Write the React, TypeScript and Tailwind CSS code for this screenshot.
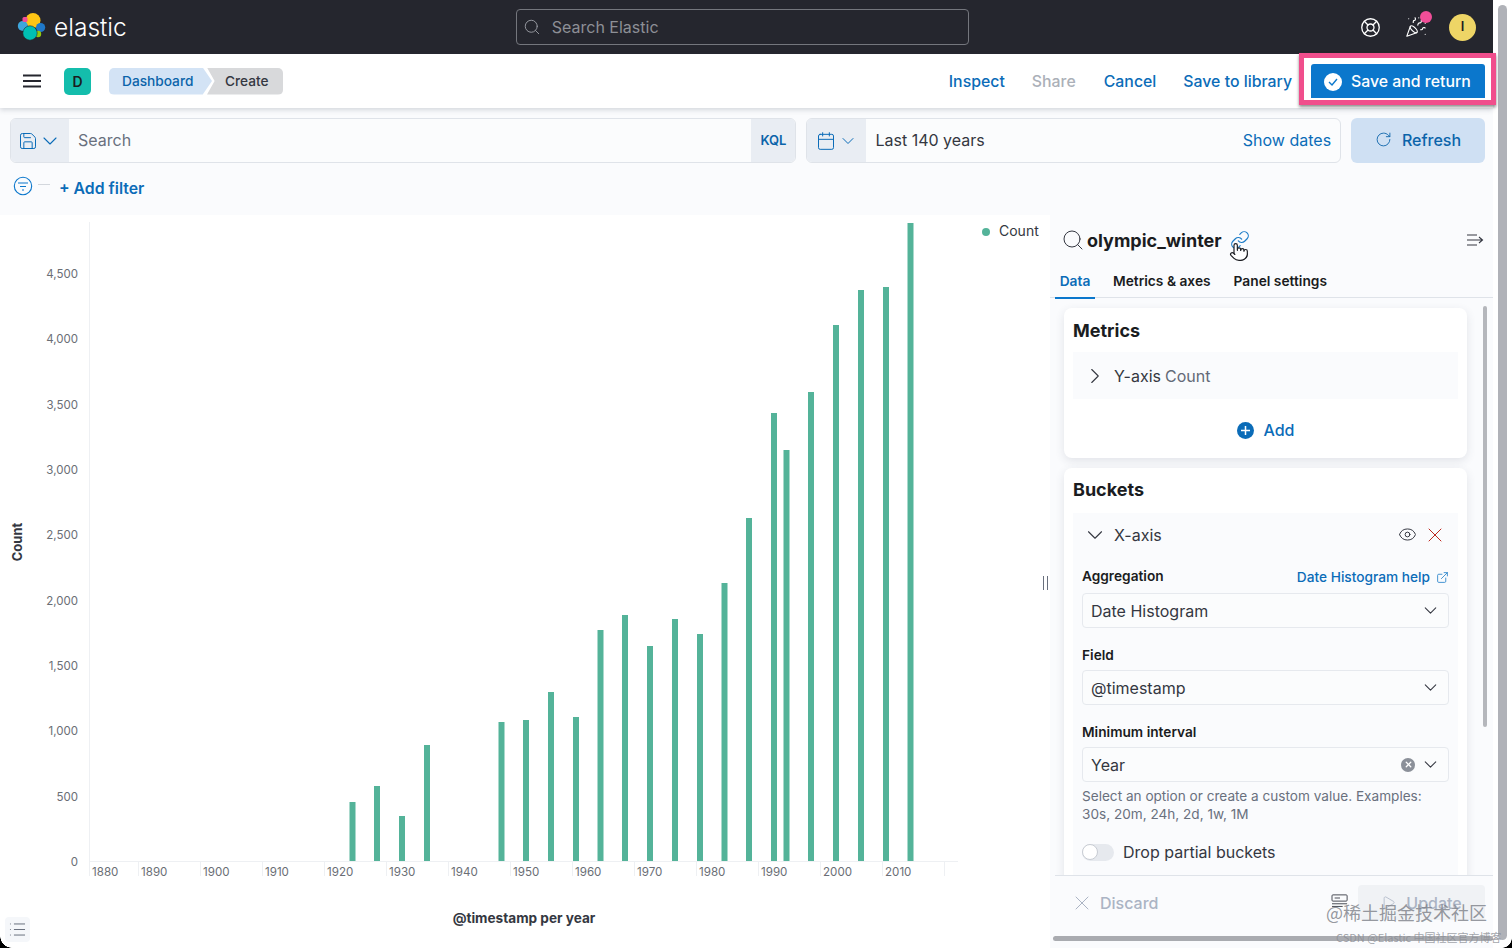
import {
  Calendar,
  ChevronDown,
  ChevronRight,
  Eye,
  ExternalLink,
  LifeBuoy,
  Link as LinkIcon,
  List,
  PartyPopper,
  Play,
  Pointer,
  RotateCw,
  Save,
  Search,
  X,
} from "lucide-react";

const yTicks = [
  { label: "0", y: 861 },
  { label: "500", y: 796 },
  { label: "1,000", y: 730.5 },
  { label: "1,500", y: 665 },
  { label: "2,000", y: 600 },
  { label: "2,500", y: 534.5 },
  { label: "3,000", y: 469 },
  { label: "3,500", y: 404 },
  { label: "4,000", y: 338.5 },
  { label: "4,500", y: 273 },
];

const xTicks = ["1880", "1890", "1900", "1910", "1920", "1930", "1940", "1950", "1960", "1970", "1980", "1990", "2000", "2010"];

const bars = [
  [352.5, 802], [377, 786], [402, 816], [427, 745], [501.5, 722], [526, 720], [551, 692], [576, 717],
  [600.5, 630], [625, 615], [650, 646], [675, 619], [700, 634], [724.5, 583], [749, 518], [774, 413],
  [786.5, 450], [811, 392], [836, 325], [861, 290], [886, 287], [910.5, 223],
];

function ElasticLogo() {
  return (
    <svg width="30" height="30" viewBox="0 0 30 30" className="shrink-0">
      <circle cx="16" cy="8.5" r="7.5" fill="#fec514" />
      <circle cx="5.8" cy="14" r="5" fill="#3ea6dc" />
      <circle cx="23.6" cy="15.5" r="4.6" fill="#1f78c9" />
      <circle cx="21" cy="22" r="3.2" fill="#93c90e" />
      <circle cx="13" cy="21" r="7.2" fill="#00bfb3" stroke="#25262e" strokeWidth="0.6" />
      <rect x="5.5" y="5" width="5" height="5" rx="1.5" fill="#f04e98" />
    </svg>
  );
}

function Chart() {
  return (
    <svg width="1050" height="733" viewBox="0 215 1050 733" className="block shrink-0 bg-white">
      <line x1="89.5" y1="222" x2="89.5" y2="861" stroke="#eef0f3" />
      <line x1="89" y1="861.5" x2="958" y2="861.5" stroke="#eef0f3" />
      {yTicks.map((t) => (
        <text key={t.label} x="78" y={t.y + 4.5} textAnchor="end" fontSize="11.5" fill="#6a6e75">
          {t.label}
        </text>
      ))}
      {xTicks.map((label, i) => {
        const tick = i === 0 ? 89.5 : 76.5 + i * 62;
        return (
          <g key={label}>
            <line x1={tick} y1="861" x2={tick} y2="876" stroke="#eef0f3" />
            <text x={tick + 2.5} y="875.5" fontSize="11.6" fill="#6a6e75">
              {label}
            </text>
          </g>
        );
      })}
      <line x1="944.5" y1="861" x2="944.5" y2="876" stroke="#eef0f3" />
      {bars.map(([x, top]) => (
        <rect key={x} x={x - 3} y={top} width="6" height={861 - top} fill="#54b399" />
      ))}
      <text x="524" y="923" textAnchor="middle" fontSize="13.6" fontWeight="700" fill="#343741">
        @timestamp per year
      </text>
      <text transform="translate(22 542) rotate(-90)" textAnchor="middle" fontSize="13" fontWeight="700" fill="#343741">
        Count
      </text>
      <circle cx="986" cy="232" r="4" fill="#54b399" />
      <text x="999" y="236" fontSize="14" fill="#343741">
        Count
      </text>
      <line x1="1043.5" y1="576" x2="1043.5" y2="590" stroke="#69707d" />
      <line x1="1047.5" y1="576" x2="1047.5" y2="590" stroke="#69707d" />
    </svg>
  );
}

function Field({ label, value, clear, first }: { label: string; value: string; clear?: boolean; first?: boolean }) {
  return (
    <div className="flex flex-col">
      <div className="flex h-[20px] items-center text-[13.7px] font-semibold leading-none text-[#1a1c21]">{label}</div>
      <div
        className={
          first
            ? "mt-[6px] flex h-[35px] items-center justify-between rounded-[4px] border border-[#e6e9ee] bg-[#fbfcfd] pl-[8px] pr-[7px] text-[16px] text-[#343741]"
            : "mt-[4px] flex h-[35px] items-center justify-between rounded-[4px] border border-[#e6e9ee] bg-[#fbfcfd] pl-[8px] pr-[7px] text-[16px] text-[#343741]"
        }
      >
        <span>{value}</span>
        <span className="flex items-center gap-[5px]">
          {clear && (
            <span className="flex h-[14px] w-[14px] items-center justify-center rounded-full bg-[#8b9099]">
              <X size={9} color="#ffffff" strokeWidth={3.5} />
            </span>
          )}
          <ChevronDown size={21} color="#343741" strokeWidth={1.2} />
        </span>
      </div>
    </div>
  );
}

function EditorPanel() {
  return (
    <div className="relative flex h-[733px] w-[443px] shrink-0 flex-col overflow-hidden bg-[#fafbfd]">
      <div className="flex h-[50px] shrink-0 items-center pl-[11px] pr-[8px]">
        <Search size={24} color="#343741" strokeWidth={1} className="shrink-0" />
        <span className="ml-[2px] text-[18px] font-bold text-[#1a1c21]">olympic_winter</span>
        <LinkIcon size={20} color="#1c7cc7" strokeWidth={1.4} className="ml-[8px]" />
        <svg width="18" height="14" viewBox="0 0 18 14" fill="none" stroke="#343741" strokeWidth="1.1" className="ml-auto mr-[1px] shrink-0">
          <path d="M1 2h10M1 7h15M1 12h10M13 4l3.5 3-3.5 3" />
        </svg>
      </div>
      <Pointer size={20} color="#1a1c21" fill="#ffffff" strokeWidth={1.4} className="absolute left-[179px] top-[27px]" />
      <div className="flex h-[33px] shrink-0 items-center gap-[18px] border-b border-[#dfe3e9] pl-[5px] pt-[1px] text-[13.75px] font-semibold text-[#1a1c21]">
        <span className="-mb-[1px] flex h-[33px] w-[40px] items-center justify-center border-b-2 border-[#0b77cc] text-[#0b6cb8]">Data</span>
        <span>Metrics &amp; axes</span>
        <span className="ml-[5px]">Panel settings</span>
      </div>

      <div className="flex min-h-0 flex-1 flex-col gap-[10px] pl-[14px] pt-[10px]">
        <div className="flex h-[150px] w-[403px] shrink-0 flex-col rounded-[8px] bg-white px-[9px] shadow-[0_3px_10px_rgba(50,60,80,0.12)]">
          <div className="flex h-[44px] items-center pt-[1px] text-[18px] font-bold text-[#1a1c21]">Metrics</div>
          <div className="flex h-[47px] items-center bg-[#fafbfd] pl-[9px] text-[16px] text-[#343741]">
            <ChevronRight size={26} strokeWidth={1} />
            <span className="ml-[6px]">Y-axis</span>
            <span className="ml-[4px] text-[#646a77]">Count</span>
          </div>
          <div className="flex flex-1 items-center justify-center gap-[10px] pt-[3px] text-[16px] font-medium text-[#0b6cb8]">
            <span className="flex h-[17px] w-[17px] items-center justify-center rounded-full bg-[#0b6cb8] text-white">
              <svg width="9" height="9" viewBox="0 0 9 9" stroke="#ffffff" strokeWidth="1.5">
                <path d="M4.5 0v9M0 4.5h9" />
              </svg>
            </span>
            Add
          </div>
        </div>

        <div className="flex w-[403px] flex-col rounded-t-[8px] bg-white px-[9px] shadow-[0_3px_10px_rgba(50,60,80,0.12)]">
          <div className="flex h-[45px] shrink-0 items-center pb-[2px] text-[18px] font-bold text-[#1a1c21]">Buckets</div>
          <div className="flex flex-col bg-[#fafbfd] px-[9px] pb-[20px]">
            <div className="flex h-[45px] items-center pb-[2px] text-[16px] text-[#343741]">
              <ChevronDown size={26} strokeWidth={1} />
              <span className="ml-[6px]">X-axis</span>
              <Eye size={19} strokeWidth={1.25} className="ml-auto" />
              <X size={24} color="#bd271e" strokeWidth={1} className="ml-[6px] mr-[2px]" />
            </div>
            <div className="relative mt-[9px]">
              <Field label="Aggregation" value="Date Histogram" first />
              <span className="absolute right-0 top-0 flex items-center gap-[6px] text-[13.7px] font-medium text-[#0b6cb8]">
                Date Histogram help
                <ExternalLink size={13} color="#1c7cc7" strokeWidth={1.5} />
              </span>
            </div>
            <div className="mt-[18px]">
              <Field label="Field" value="@timestamp" />
            </div>
            <div className="mt-[18px]">
              <Field label="Minimum interval" value="Year" clear />
            </div>
            <p className="mt-[5px] text-[13.6px] leading-[18px] text-[#69707d]">
              Select an option or create a custom value. Examples:
              <br />
              30s, 20m, 24h, 2d, 1w, 1M
            </p>
            <div className="mt-[17px] flex items-center text-[16px] text-[#343741]">
              <span className="flex h-[17px] w-[32px] items-center rounded-full bg-[#e6e9ee]">
                <span className="h-[16px] w-[16px] rounded-full border border-[#c8ccd3] bg-white" />
              </span>
              <span className="ml-[9px]">Drop partial buckets</span>
            </div>
          </div>
        </div>
      </div>

      <div className="absolute bottom-0 left-[5px] right-0 flex h-[73px] items-start border-t border-[#dfe3e9] bg-[#fafbfd] pl-[15px] pr-[8px] pt-[9px] text-[16px] font-medium text-[#abb4c4]">
        <span className="mt-[6px] flex items-center gap-[6px]">
          <X size={24} strokeWidth={1} />
          Discard
        </span>
        <svg width="18" height="16" viewBox="0 0 20 18" fill="none" stroke="#343741" strokeWidth="1" className="ml-auto mr-[9px] mt-[9px]">
          <rect x="1" y="1" width="17" height="7" rx="1" />
          <path d="M4 4.5h6M1 11h17M1 14h12" />
        </svg>
        <span className="flex h-[35px] w-[127px] items-center justify-center gap-[10px] rounded-[4px] bg-[#f0f2f5]">
          <Play size={15} strokeWidth={1.25} />
          Update
        </span>
      </div>

      <div className="absolute right-[6px] top-[91px] h-[421px] w-[4px] rounded-full bg-[#b5b7bc]" />
      <div className="absolute bottom-[7px] left-[3px] right-0 h-[5px] rounded-full bg-[#a9abb0]" />
    </div>
  );
}

export default function App() {
  return (
    <div className="relative flex h-[948px] w-[1512px] overflow-hidden bg-white font-['Inter',sans-serif]">
      <div className="flex w-[1493px] shrink-0 flex-col">
        <header className="flex h-[54px] shrink-0 items-center bg-[#25262e] pl-[17px] pr-[17px]">
          <ElasticLogo />
          <span className="ml-[7px] text-[24.5px] font-light leading-none text-white">elastic</span>
          <div className="ml-[389px] flex h-[36px] w-[453px] items-center rounded-[4px] border border-[#74767d] pl-[6px] text-[16px] text-[#8d8f96]">
            <Search size={18} color="#9a9ca3" strokeWidth={1.25} />
            <span className="ml-[11px]">Search Elastic</span>
          </div>
          <div className="ml-auto flex items-center">
            <LifeBuoy size={21} color="#ffffff" strokeWidth={1.5} />
            <span className="relative ml-[24px]">
              <PartyPopper size={22} color="#ffffff" strokeWidth={1.25} />
              <span className="absolute -right-[5px] -top-[5px] h-[12px] w-[12px] rounded-full bg-[#f04e98]" />
            </span>
            <span className="ml-[22px] flex h-[27px] w-[27px] items-center justify-center rounded-full bg-[#eed566] text-[13px] font-semibold text-[#1a1c21]">
              I
            </span>
          </div>
        </header>

        <nav className="relative z-10 flex h-[54px] shrink-0 items-center bg-white pl-[23px] shadow-[0_2px_5px_rgba(60,70,90,0.2)]">
          <svg width="18" height="14" viewBox="0 0 18 14" stroke="#25262e" strokeWidth="1.8">
            <path d="M0 1.5h18M0 7h18M0 12.5h18" />
          </svg>
          <span className="ml-[23px] flex h-[27px] w-[27px] items-center justify-center rounded-[5px] bg-[#14bdac] text-[14px] font-semibold text-[#1a1c21]">
            D
          </span>
          <div className="ml-[18px] flex h-[27px] items-center text-[13.7px] font-medium">
            <span className="flex h-full w-[103px] items-center rounded-l-[5px] bg-[#d3e3f5] pl-[13px] pt-px text-[#0b64aa] [clip-path:polygon(0_0,91%_0,100%_50%,91%_100%,0_100%)]">
              Dashboard
            </span>
            <span className="-ml-[5px] flex h-full w-[76px] items-center rounded-r-[5px] bg-[#d8d9db] pl-[18px] pt-px text-[#343741] [clip-path:polygon(0_0,100%_0,100%_100%,0_100%,10%_50%)]">
              Create
            </span>
          </div>
          <div className="ml-auto flex items-center pr-[8px] text-[15.85px] font-medium text-[#0b6cb8]">
            <span className="pt-[2px]">Inspect</span>
            <span className="ml-[27px] pt-[2px] text-[#abb0b8]">Share</span>
            <span className="ml-[28px] pt-[2px]">Cancel</span>
            <span className="ml-[27px] pt-[2px]">Save to library</span>
            <span className="-mt-px ml-[19px] flex h-[34px] w-[174px] items-center rounded-t-[3px] bg-[#0b77cc] pl-[13px] pt-[3px] text-white">
              <span className="flex h-[18px] w-[18px] items-center justify-center rounded-full bg-white">
                <svg width="10" height="8" viewBox="0 0 10 8" fill="none" stroke="#0b77cc" strokeWidth="1.4">
                  <path d="M1 4l3 3 5-6" />
                </svg>
              </span>
              <span className="ml-[9px]">Save and return</span>
            </span>
          </div>
        </nav>

        <div className="flex h-[107px] shrink-0 flex-col bg-[#fafbfd] pl-[10px] pr-[8px] pt-[10px]">
          <div className="flex h-[45px] gap-[10px]">
            <div className="flex h-full w-[787px] overflow-hidden rounded-[6px] border border-[#dfe3e9] bg-[#fbfcfd] text-[16px]">
              <span className="flex w-[58px] items-center justify-center bg-[#e9edf3]">
                <Save size={20} color="#0b6cb8" strokeWidth={1.2} />
                <ChevronDown size={24} color="#0b6cb8" strokeWidth={1.1} />
              </span>
              <span className="flex flex-1 items-center pb-[2px] pl-[9px] text-[#69707d]">Search</span>
              <span className="flex w-[44px] items-center justify-center bg-[#e9edf3] text-[13px] font-semibold text-[#0b64aa]">KQL</span>
            </div>
            <div className="flex h-full w-[535px] overflow-hidden rounded-[6px] border border-[#dfe3e9] bg-[#fbfcfd] text-[16px]">
              <span className="flex w-[59px] items-center justify-center gap-[2px] bg-[#e9edf3]">
                <Calendar size={20} color="#0b6cb8" strokeWidth={1.2} />
                <ChevronDown size={20} color="#0b6cb8" strokeWidth={1.2} />
              </span>
              <span className="flex flex-1 items-center pb-[2px] pl-[9px] text-[#343741]">Last 140 years</span>
              <span className="flex items-center pb-[2px] pr-[9px] text-[#0b6cb8]">Show dates</span>
            </div>
            <span className="flex h-full w-[134px] items-center justify-center gap-[10px] rounded-[6px] bg-[#cfe0f3] pb-[2px] text-[16px] font-medium text-[#0b64aa]">
              <RotateCw size={17} strokeWidth={1.25} />
              Refresh
            </span>
          </div>
          <div className="mt-[16px] flex h-[20px] items-center pl-[3px]">
            <svg width="20" height="20" viewBox="0 0 20 20" fill="none" stroke="#0b77cc" strokeWidth="1.1" className="-mt-[6px]">
              <circle cx="10" cy="10" r="8.7" />
              <path d="M5 7h10M7 10.5h6M9 14h2" />
            </svg>
            <span className="ml-[5px] -mt-[9px] h-px w-[12px] bg-[#d3d7dd]" />
            <span className="ml-[9px] text-[15.8px] font-semibold text-[#0b6cb8]">+ Add filter</span>
          </div>
        </div>

        <div className="relative flex min-h-0 flex-1">
          <Chart />
          <EditorPanel />
          <span className="absolute bottom-[6px] left-[5px] flex h-[25px] w-[25px] items-center justify-center rounded-[4px] bg-[#f5f7fa]">
            <List size={19} color="#69707d" strokeWidth={1.25} />
          </span>
        </div>
      </div>

      <div className="flex flex-1 justify-center bg-white pb-[8px] pt-[5px]">
        <div className="h-full w-[9px] rounded-full bg-[#b0b2b8]" />
      </div>

      {/* annotation box painted over the screenshot */}
      <div className="pointer-events-none absolute left-[1299px] top-[53px] z-20 h-[52px] w-[197px] border-[5px] border-[#f04e8c] shadow-[0_2px_3px_rgba(0,0,0,0.45)]" />

      {/* window corners + watermarks */}
      <div className="absolute bottom-0 left-0 z-20 h-[12px] w-[12px] bg-[radial-gradient(circle_at_100%_0,transparent_11.5px,#000000_12px)]" />
      <div className="absolute bottom-0 right-0 z-20 h-[10px] w-[10px] bg-[radial-gradient(circle_at_0_0,transparent_9.5px,#000000_10px)]" />
      <span className="absolute left-[1326px] top-[899px] z-20 font-['Noto_Sans_CJK_SC',sans-serif] text-[18px] leading-[26px] text-[#7b7e86]/80">
        @稀土掘金技术社区
      </span>
      <span className="absolute left-[1336px] top-[930px] z-20 font-['Noto_Sans_CJK_SC',sans-serif] text-[11px] leading-[14px] text-[#8b8e95]/80">
        CSDN @Elastic 中国社区官方博客
      </span>
    </div>
  );
}
